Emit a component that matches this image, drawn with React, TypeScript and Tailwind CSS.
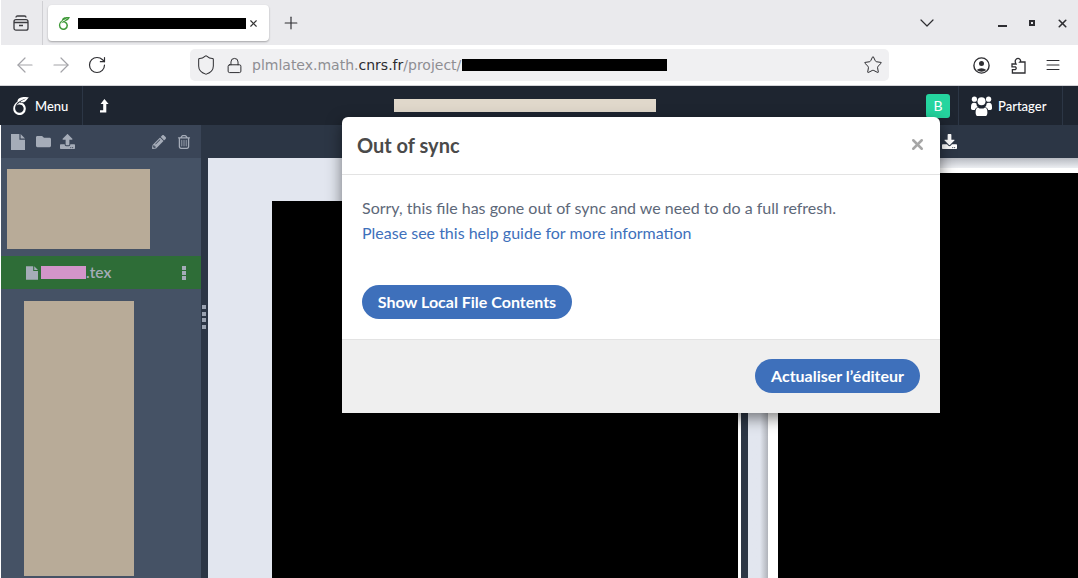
import * as React from "react";
import { FaDownload, FaFolder, FaPencilAlt, FaUpload } from "react-icons/fa";
import { FaRegTrashCan } from "react-icons/fa6";
import { SiOverleaf } from "react-icons/si";
import { LuArrowLeft, LuArrowRight, LuChevronDown, LuMenu, LuPlus, LuRotateCw, LuShield, LuLock, LuStar, LuX } from "react-icons/lu";

function TabsIcon() {
  return (
    <svg width="16" height="16" viewBox="0 0 16 16" fill="none" stroke="#3b3b3f" strokeWidth="1.3">
      <rect x="1" y="4.7" width="14" height="10.5" rx="2" />
      <path d="M3 2.5 Q3 1 4.5 1 H11.5 Q13 1 13 2.5 M1 7.5 H15 M6 10.5 H10" />
    </svg>
  );
}

function AccountIcon() {
  return (
    <svg width="17" height="17" viewBox="0 0 17 17" fill="none" stroke="#2e2e32" strokeWidth="1.4">
      <circle cx="8.5" cy="8.5" r="7.6" />
      <circle cx="8.5" cy="6.6" r="2.5" fill="#2e2e32" stroke="none" />
      <path d="M3.6 13 Q8.5 9.5 13.4 13 Q8.5 16.4 3.6 13Z" fill="#2e2e32" stroke="none" />
    </svg>
  );
}

function PuzzleIcon() {
  return (
    <svg width="15" height="17" viewBox="0 0 15 17" fill="none" stroke="#2e2e32" strokeWidth="1.3">
      <path d="M1 7 H5 Q3.4 4 5 2.4 Q7 .2 9 2.4 Q10.2 4 9 5 H14 V16 H1.4 V12.6 H4.4 Q6 11.4 4.4 9.8 H1 Z" />
    </svg>
  );
}

function UpArrowIcon() {
  return (
    <svg width="10" height="14" viewBox="0 0 10 14" fill="white">
      <path d="M5.4 0 L9.6 5 H7.3 V13.4 H1 V11.2 H4.2 V5 H1.6 Z" />
    </svg>
  );
}

function UsersIcon() {
  return (
    <svg width="21" height="20" viewBox="0 0 21 20" fill="white">
      <circle cx="3.4" cy="3.2" r="2.6" />
      <circle cx="17.6" cy="3.2" r="2.6" />
      <circle cx="10.5" cy="5.2" r="4" />
      <path d="M0 11 Q0 6.8 3 6.8 Q4.6 6.8 5.4 7.6 Q5.4 10 7 11 Q4.4 11.6 3.8 14 H1.6 Q0 14 0 12.6Z" />
      <path d="M21 11 Q21 6.8 18 6.8 Q16.4 6.8 15.6 7.6 Q15.6 10 14 11 Q16.6 11.6 17.2 14 H19.4 Q21 14 21 12.6Z" />
      <path d="M7 11.4 Q8.4 12.6 10.5 12.6 Q12.6 12.6 14 11.4 Q16.4 12 16.4 16.4 Q16.4 20 14 20 H7 Q4.6 20 4.6 16.4 Q4.6 12 7 11.4Z" />
    </svg>
  );
}

function FileIcon({ w, h }: { w: number; h: number }) {
  return (
    <svg width={w} height={h} viewBox="0 0 14 16" fill="#a5acb8" className="shrink-0">
      <path d="M0 0 H8.4 V5.8 H14 V16 H0Z M9.6 0 L14 4.5 H9.6Z" />
    </svg>
  );
}

function WindowButtons() {
  return (
    <div className="flex items-center gap-[21px] text-[#2e2e32] mr-[9px]">
      <div className="w-[9px] h-[2px] bg-[#2e2e32] mt-[6px]" />
      <div className="w-[6px] h-[6px] border-2 border-[#2e2e32] ml-[1px]" />
      <LuX size={13} strokeWidth={3} />
    </div>
  );
}

function TabBar() {
  return (
    <div className="h-[45px] bg-[#eaeaed] flex items-center pt-[1px] shrink-0 ml-[1px]">
      <div className="w-[42px] h-[44px] flex items-center justify-center pr-[2px] border-r border-[#cfcfd3]">
        <TabsIcon />
      </div>
      <div className="ml-[5px] w-[221px] h-[36px] bg-white rounded-[4px] shadow-[0_1px_2px_rgba(0,0,0,0.3)] flex items-center pl-[10px]">
        <SiOverleaf size={13} color="#3f9a39" />
        <div className="ml-[7px] w-[168px] h-[11px] bg-black" />
        <LuX size={11} strokeWidth={2.5} className="ml-[2px] text-[#333]" />
      </div>
      <LuPlus size={20} strokeWidth={1.4} className="ml-[12px] text-[#2e2e32]" />
      <div className="flex-1" />
      <LuChevronDown size={24} strokeWidth={1.2} className="mr-[59px] text-[#2e2e32]" />
      <WindowButtons />
    </div>
  );
}

function UrlBar() {
  return (
    <div className="h-[41px] bg-white flex items-center shrink-0 border-b border-[#d4d4d8]">
      <LuArrowLeft size={24} strokeWidth={1.2} className="ml-[13px] text-[#a3a3a8]" />
      <LuArrowRight size={24} strokeWidth={1.2} className="ml-[12px] text-[#a3a3a8]" />
      <LuRotateCw size={20} strokeWidth={1.4} className="ml-[14px] text-[#2e2e32]" />
      <div className="ml-[83px] w-[699px] h-[32px] bg-[#f0f0f2] rounded-[5px] flex items-center pl-[5px] pr-[6px]">
        <LuShield size={22} strokeWidth={1.1} className="text-[#2e2e32]" />
        <LuLock size={17} strokeWidth={1.4} className="ml-[9px] text-[#2e2e32]" />
        <div className="ml-[9px] text-[14px] text-[#8e8e93] whitespace-nowrap font-['DejaVu_Sans',sans-serif]">
          plmlatex.math.<span className="text-[#2b2b30]">cnrs.fr</span>/project/
        </div>
        <div className="ml-[1px] w-[205px] h-[12px] bg-black" />
        <div className="flex-1" />
        <LuStar size={20} strokeWidth={1.2} className="text-[#2e2e32]" />
      </div>
      <div className="ml-[84px]"><AccountIcon /></div>
      <div className="ml-[21px]"><PuzzleIcon /></div>
      <LuMenu size={18} strokeWidth={1.4} className="ml-[18px] text-[#2e2e32]" />
    </div>
  );
}

function AppHeader() {
  return (
    <div className="h-[39px] bg-[#1e2530] flex items-center shrink-0 text-white">
      <div className="w-[83px] h-full flex items-center pl-[12px] border-r border-[#2c3645]">
        <SiOverleaf size={18} color="white" />
        <span className="ml-[5px] mt-[2px] text-[13px] font-medium">Menu</span>
      </div>
      <div className="ml-[16px]"><UpArrowIcon /></div>
      <div className="ml-[285px] w-[262px] h-[13px] bg-[#e0d8cb]" />
      <div className="flex-1" />
      <div className="w-[24px] h-[24px] bg-[#25d59f] rounded-[3px] flex items-center justify-center text-[14px] mr-[8px]">B</div>
      <div className="w-[105px] h-full flex items-center pl-[12px] border-x border-[#2c3645]">
        <UsersIcon />
        <span className="ml-[6px] mt-[2px] text-[13px] font-medium">Partager</span>
      </div>
      <div className="w-[15px]" />
    </div>
  );
}

function Sidebar() {
  return (
    <div className="w-[200px] shrink-0 bg-[#455265] flex flex-col overflow-hidden">
      <div className="h-[33px] bg-[#3a4557] flex items-center pl-[10px] pr-[10px] text-[#a5acb8] shrink-0">
        <FileIcon w={14} h={16} />
        <FaFolder size={15} className="ml-[11px]" />
        <FaUpload size={15} className="ml-[9px]" />
        <div className="flex-1" />
        <FaPencilAlt size={14} />
        <FaRegTrashCan size={14} className="ml-[11px]" />
      </div>
      <div className="ml-[6px] mt-[11px] w-[143px] h-[80px] bg-[#b8ab98] shrink-0" />
      <div className="mt-[7px] h-[33px] bg-[#2e6d37] flex items-center pl-[25px] text-[#a5acb8] shrink-0">
        <FileIcon w={12} h={14} />
        <div className="ml-[3px] w-[45px] h-[13px] bg-[#d295c9]" />
        <span className="text-[15.5px] font-semibold">.tex</span>
        <div className="flex-1" />
        <div className="flex flex-col gap-[1px] mr-[15px]">
          <div className="w-[4px] h-[4px] bg-[#a5acb8]" />
          <div className="w-[4px] h-[4px] bg-[#a5acb8]" />
          <div className="w-[4px] h-[4px] bg-[#a5acb8]" />
        </div>
      </div>
      <div className="ml-[23px] mt-[12px] w-[110px] h-[275px] bg-[#b8ab98] shrink-0" />
    </div>
  );
}

function Resizer() {
  return (
    <div className="w-[7px] shrink-0 bg-[#2c3645] flex flex-col items-start gap-[2.6px] pt-[180px] pl-[1px]">
      {[0, 1, 2, 3].map((i) => (
        <div key={i} className="w-[4px] h-[4px] bg-[#9aa2b0]" />
      ))}
    </div>
  );
}

function Workspace() {
  return (
    <div className="flex-1 flex flex-col min-w-0">
      <div className="h-[33px] bg-[#2c3645] shrink-0 flex items-center justify-end pr-[121px] text-white">
        <FaDownload size={15} />
      </div>
      <div className="flex-1 flex min-h-0">
        <div className="w-[530px] bg-[#e2e6ef] pl-[64px] pt-[43px]">
          <div className="w-full h-full bg-black" />
        </div>
        <div className="w-[3px] bg-white" />
        <div className="w-[7px] bg-[#2c3645]" />
        <div className="w-[20px] bg-gradient-to-r from-[#e2e6ef] from-60% to-[#b0b3ba]" />
        <div className="flex-1 flex flex-col">
          <div className="h-[10px] bg-gradient-to-b from-[#b8bbc2] to-[#eceef2]" />
          <div className="h-[5px] bg-white" />
          <div className="flex-1 flex">
            <div className="w-[10px] bg-white" />
            <div className="flex-1 bg-black" />
          </div>
        </div>
      </div>
    </div>
  );
}

function Modal() {
  return (
    <div className="absolute left-[342px] top-[117px] w-[598px] h-[296px] bg-white rounded-t-[6px] flex flex-col font-['Lato',sans-serif] shadow-[0_5px_15px_rgba(0,0,0,0.5)]">
      <div className="h-[58px] shrink-0 border-b border-[#e3e3e3] flex items-center justify-between pl-[15px] pr-[14px] pb-[2px]">
        <h3 className="text-[20px] font-bold text-[#4a4a4a]">Out of sync</h3>
        <LuX size={17} strokeWidth={3.5} className="text-[#a6a6a6]" />
      </div>
      <div className="flex-1 px-[20px] pt-[20px]">
        <p className="text-[16px] leading-[25px] text-[#5d6879]">Sorry, this file has gone out of sync and we need to do a full refresh.</p>
        <p className="text-[16px] leading-[25px] text-[#3e70bb]">Please see this help guide for more information</p>
        <button className="mt-[40px] h-[34px] w-[210px] rounded-full bg-[#3e70bb] text-white text-[16px] font-bold">
          Show Local File Contents
        </button>
      </div>
      <div className="h-[74px] shrink-0 bg-[#efefef] border-t border-[#e3e3e3] flex items-center justify-end pr-[20px] pb-[2px]">
        <button className="h-[34px] w-[165px] rounded-full bg-[#3e70bb] text-white text-[16px] font-bold">
          Actualiser l’éditeur
        </button>
      </div>
    </div>
  );
}

export default function App() {
  return (
    <div className="relative w-[1078px] h-[578px] overflow-hidden bg-white flex flex-col font-['Lato',sans-serif]">
      <TabBar />
      <UrlBar />
      <AppHeader />
      <div className="flex-1 flex min-h-0 pl-[1px]">
        <Sidebar />
        <Resizer />
        <Workspace />
      </div>
      <Modal />
    </div>
  );
}
